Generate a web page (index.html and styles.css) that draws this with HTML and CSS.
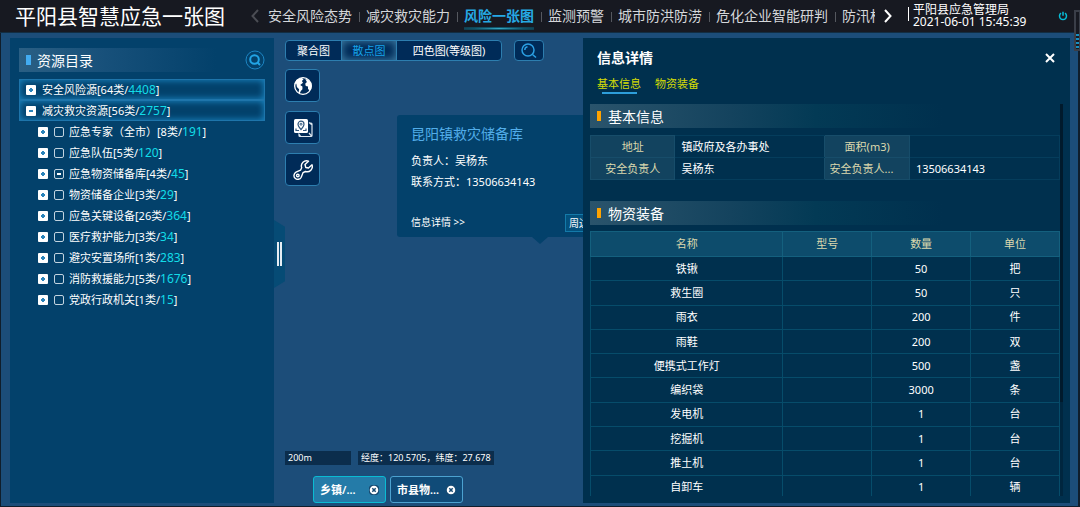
FILE: index.html
```html
<!DOCTYPE html>
<html lang="zh-CN">
<head>
<meta charset="utf-8">
<title>平阳县智慧应急一张图</title>
<link rel="stylesheet" href="styles.css">
</head>
<body>
<header class="top">
  <h1 class="brand">平阳县智慧应急一张图</h1>
  <button class="arrow arrow-prev" aria-label="上一页"><svg viewBox="0 0 8 14"><path d="M7 1 1.500 7 7 13"/></svg></button>
  <nav class="nav">
    <a href="#">安全风险态势</a>
    <a href="#">减灾救灾能力</a>
    <a href="#" class="current">风险一张图</a>
    <a href="#">监测预警</a>
    <a href="#">城市防洪防涝</a>
    <a href="#">危化企业智能研判</a>
    <a href="#">防汛标准</a>
  </nav>
  <button class="arrow arrow-next" aria-label="下一页"><svg viewBox="0 0 8 14"><path d="M1 1 6.500 7 1 13"/></svg></button>
  <div class="org"><span>平阳县应急管理局</span><time>2021-06-01 15:45:39</time></div>
  <button class="power" aria-label="退出"><svg viewBox="0 0 10 10"><path d="M3 2.200a3.500 3.500 0 1 0 4 0M5 .800v4"/></svg></button>
  <div class="edge-meter"><i></i></div>
</header>

<main class="workspace">
  <aside class="catalog">
    <div class="catalog-head">
      <h2>资源目录</h2>
      <button class="round-search" aria-label="搜索"><svg viewBox="0 0 20 20"><circle cx="10" cy="10" r="9"/><circle class="lens" cx="9.500" cy="9.500" r="4.300"/><path class="lens" d="M12.500 12.500l2.500 2.500"/></svg></button>
    </div>
    <ul class="tree">
      <li class="root"><button class="toggle plus" aria-label="展开"></button><span>安全风险源[64类/<b>4408</b>]</span></li>
      <li class="root"><button class="toggle" aria-label="收起"></button><span>减灾救灾资源[56类/<b>2757</b>]</span></li>
      <li><button class="toggle plus" aria-label="展开"></button><label><input type="checkbox"><span>应急专家（全市）[8类/<b>191</b>]</span></label></li>
      <li><button class="toggle plus" aria-label="展开"></button><label><input type="checkbox"><span>应急队伍[5类/<b>120</b>]</span></label></li>
      <li><button class="toggle plus" aria-label="展开"></button><label><input type="checkbox" class="partial"><span>应急物资储备库[4类/<b>45</b>]</span></label></li>
      <li><button class="toggle plus" aria-label="展开"></button><label><input type="checkbox"><span>物资储备企业[3类/<b>29</b>]</span></label></li>
      <li><button class="toggle plus" aria-label="展开"></button><label><input type="checkbox"><span>应急关键设备[26类/<b>364</b>]</span></label></li>
      <li><button class="toggle plus" aria-label="展开"></button><label><input type="checkbox"><span>医疗救护能力[3类/<b>34</b>]</span></label></li>
      <li><button class="toggle plus" aria-label="展开"></button><label><input type="checkbox"><span>避灾安置场所[1类/<b>283</b>]</span></label></li>
      <li><button class="toggle plus" aria-label="展开"></button><label><input type="checkbox"><span>消防救援能力[5类/<b>1676</b>]</span></label></li>
      <li><button class="toggle plus" aria-label="展开"></button><label><input type="checkbox"><span>党政行政机关[1类/<b>15</b>]</span></label></li>
    </ul>
  </aside>

  <section class="map">
    <button class="drawer" aria-label="收起目录"></button>
    <div class="map-top">
      <div class="modes">
        <button>聚合图</button><button class="active">散点图</button><button class="wide">四色图(等级图)</button>
      </div>
      <button class="box-btn find" aria-label="查找"><svg viewBox="0 0 16 16"><circle cx="7" cy="7" r="6"/><path d="M11.500 11.500 15 14.500M3.800 7A3.300 3.300 0 0 1 6.500 3.800"/></svg></button>
    </div>
    <div class="tools">
      <button class="box-btn" aria-label="底图"><svg viewBox="0 0 18 18"><circle cx="9" cy="9" r="7.500" fill="none" stroke="#fff" stroke-width="1.200"/><path fill="#fff" d="M3 3.500 7.500 1.500 9.500 3 8 4.500 9 6 6.500 8 8.500 9.500 8.500 12 7 13.500 6 16 5 15 5.500 12 3.500 10 3 7 1.500 7ZM11 2.500 14 3.500 16.500 7 16.500 11 15 13.500 13.500 11.500 13.500 9.500 11.500 9 11 7 12.500 5.500Z"/></svg></button>
      <button class="box-btn" aria-label="图层"><svg viewBox="0 0 20 20" fill="none"><path stroke="#dce6ee" stroke-width="1.200" d="M16 5h2q1 0 1 1V17.500q0 1-1 1H7q-1 0-1-1V16M16 4.500l2.500 2M5.500 15.500l2 2.500M16 15l2.500 3"/><rect x="1" y="1" width="14" height="14" rx="1.500" fill="#fff"/><path stroke="#31577d" stroke-width="1.200" d="M8 11.500C5.500 8.500 5 7.500 5 6.200a3 3 0 0 1 6 0c0 1.300-.500 2.300-3 5.300ZM3 10.500v2h3M10 12.500h3v-2"/><circle cx="8" cy="6.200" r="1" stroke="#31577d"/></svg></button>
      <button class="box-btn" aria-label="工具"><svg viewBox="0 0 20 20" fill="none" stroke="#fff" stroke-width="1.400" stroke-linejoin="round"><path d="M15.500 1.200A5.200 5.200 0 0 0 8.700 7.800L7.500 10.200 3 12.200A3.800 3.800 0 1 0 8.200 17.200L10 12.700 12.500 11.500A5.200 5.200 0 0 0 19 4.800L15.500 8 12.800 7.500 12 4.500Z"/><circle cx="4.800" cy="15.500" r="1.300"/></svg></button>
    </div>
    <article class="popup">
      <h3>昆阳镇救灾储备库</h3>
      <p>负责人：吴杨东</p>
      <p>联系方式：13506634143</p>
      <div class="popup-foot"><a href="#">信息详情 &gt;&gt;</a><button>周边资源</button></div>
    </article>
    <div class="map-bottom">
      <div class="readouts"><span class="scale">200m</span><span>经度：120.5705，纬度：27.678</span></div>
      <div class="chips">
        <button class="chip on">乡镇/...<svg viewBox="0 0 10 10"><circle cx="5" cy="5" r="5"/><path d="m3.300 3.300 3.400 3.400m0-3.400-3.400 3.400"/></svg></button>
        <button class="chip">市县物...<svg viewBox="0 0 10 10"><circle cx="5" cy="5" r="5"/><path d="m3.300 3.300 3.400 3.400m0-3.400-3.400 3.400"/></svg></button>
      </div>
    </div>
  </section>

  <aside class="detail">
    <div class="detail-head"><h2>信息详情</h2><button class="close" aria-label="关闭"><svg viewBox="0 0 10 10"><path d="m1 1 8 8M9 1 1 9"/></svg></button></div>
    <nav class="tabs"><a href="#basic" class="selected">基本信息</a><a href="#goods">物资装备</a></nav>
    <div class="scroll">
      <div class="scroll-body">
        <h3 class="section" id="basic">基本信息</h3>
        <table class="info">
          <tr><th scope="row">地址</th><td>镇政府及各办事处</td><th scope="row">面积(m3)</th><td></td></tr>
          <tr><th scope="row">安全负责人</th><td>吴杨东</td><th scope="row" class="long">安全负责人...</th><td>13506634143</td></tr>
        </table>
        <h3 class="section" id="goods">物资装备</h3>
        <table class="goods">
          <colgroup><col class="c-name"><col class="c-model"><col class="c-count"><col class="c-unit"></colgroup>
          <thead><tr><th>名称</th><th>型号</th><th>数量</th><th>单位</th></tr></thead>
          <tbody>
            <tr><td>铁锹</td><td></td><td>50</td><td>把</td></tr>
            <tr><td>救生圈</td><td></td><td>50</td><td>只</td></tr>
            <tr><td>雨衣</td><td></td><td>200</td><td>件</td></tr>
            <tr><td>雨鞋</td><td></td><td>200</td><td>双</td></tr>
            <tr><td>便携式工作灯</td><td></td><td>500</td><td>盏</td></tr>
            <tr><td>编织袋</td><td></td><td>3000</td><td>条</td></tr>
            <tr><td>发电机</td><td></td><td>1</td><td>台</td></tr>
            <tr><td>挖掘机</td><td></td><td>1</td><td>台</td></tr>
            <tr><td>推土机</td><td></td><td>1</td><td>台</td></tr>
            <tr><td>自卸车</td><td></td><td>1</td><td>辆</td></tr>
          </tbody>
        </table>
      </div>
      <div class="track"><i></i></div>
    </div>
  </aside>
</main>
</body>
</html>
```

FILE: styles.css
```css
*, *::before, *::after { box-sizing: border-box; }
html, body { height: 100%; }
body {
  margin: 0;
  display: flex;
  flex-direction: column;
  overflow: hidden;
  color: #fff;
  background: #1c4d79;
  font: 11px/21px "Noto Sans", "Noto Sans CJK SC", sans-serif;
}
h1, h2, h3, p, ul { margin: 0; padding: 0; font-weight: 400; }
a { color: inherit; text-decoration: none; }
button { margin: 0; padding: 0; border: 0; background: none; color: inherit; font: inherit; cursor: pointer; }
svg { display: block; }

/* Header */
.top {
  position: relative;
  display: flex;
  align-items: center;
  flex: none;
  height: 33px;
  padding: 0 12px 0 15px;
  background: #171921;
  border-bottom: 1px solid #122d42;
}
.brand { width: 236px; font-size: 21px; line-height: 32px; white-space: nowrap; }
.arrow svg { width: 8px; height: 14px; fill: none; stroke: #fff; stroke-width: 2; }
.arrow-prev { margin-right: 9px; }
.arrow-prev svg { stroke: #4b4d54; }
.nav { display: flex; flex: 1; overflow: hidden; font-size: 14px; line-height: 32px; color: #d5d7da; white-space: nowrap; }
.nav a { position: relative; flex: none; margin-right: 14px; }
.nav a:not(:last-child)::after { content: ""; position: absolute; right: -8px; top: 12px; height: 10px; border-left: 1px solid #55585f; }
.nav .current { color: #26a9e4; font-weight: 700; }
.nav .current::before {
  content: "";
  position: absolute;
  inset: auto 0 2px;
  height: 3px;
  background: radial-gradient(ellipse at center, #35a9c4, #0f5268 50%, #123542);
}
.arrow-next { margin: 0 16px 0 9px; }
.org { position: relative; display: flex; flex-direction: column; width: 150px; padding: 0 0 1px 5px; font-size: 12px; line-height: 12px; white-space: nowrap; }
.org::before { content: ""; position: absolute; left: 0; top: 3px; height: 14px; border-left: 1px solid #fff; }
.power svg { width: 10px; height: 10px; fill: none; stroke: #06bcd6; stroke-width: 1.500; }
.edge-meter { position: absolute; z-index: 2; right: 0; top: 10px; width: 6px; height: 41px; border: 2px solid #3a3e48; border-right-width: 1px; background: #171921; }
.edge-meter i { display: block; height: 14px; margin-top: 22px; background: repeating-linear-gradient(#168fc2 0 2px, #171921 2px 4px); }

/* Work area */
.workspace {
  display: flex;
  flex: 1;
  min-height: 0;
  padding: 5px 8px 3px 9px;
  border: solid #101d2b;
  border-width: 0 2px 1px 1px;
}

/* Resource catalogue */
.catalog { flex: none; width: 264px; padding: 10px 9px; background: #03416b; }
.catalog-head { display: flex; align-items: center; justify-content: space-between; height: 24px; background: linear-gradient(90deg, #2a5f84, #17507a 35%, #03416b 80%); }
.catalog-head h2 { display: flex; align-items: center; gap: 6px; padding-left: 7px; font-size: 14px; }
.catalog-head h2::before { content: ""; width: 5px; height: 10px; background: #42acf2; }
.round-search svg { width: 20px; height: 20px; fill: none; stroke: #1d86c4; stroke-width: 1; }
.round-search .lens { stroke: #22a4e5; stroke-width: 2; }
.tree { margin-top: 7px; list-style: none; white-space: nowrap; }
.tree li { display: flex; align-items: center; gap: 6px; height: 21px; padding-left: 19px; }
.tree .root { padding-left: 6px; border: 1px solid #1e75ab; box-shadow: inset 0 0 7px #1c8bc9; }
.tree b { color: #12dce8; font-size: 12px; font-weight: 400; }
.tree label { display: flex; align-items: center; }
.toggle { flex: none; width: 10px; height: 10px; border-radius: 1px; background: linear-gradient(#2a84bb, #2a84bb) center / 4px 2px no-repeat #fff; }
.toggle.plus { background: linear-gradient(#2a84bb, #2a84bb) center / 4px 2px no-repeat, linear-gradient(#2a84bb, #2a84bb) center / 2px 4px no-repeat #fff; }
.tree input { appearance: none; width: 10px; height: 10px; margin: 0 5px 0 0; border: 1px solid #c2d3df; border-radius: 2px; }
.tree .partial { background: linear-gradient(#fff, #fff) center / 4px 2px no-repeat; }

/* Map */
.map { position: relative; display: flex; flex-direction: column; flex: 1; min-width: 0; overflow: hidden; padding: 2px 0 0 11px; }
.drawer { position: absolute; left: 0; top: 182px; width: 11px; height: 68px; background: #064b75; clip-path: polygon(0 0, 100% 10%, 100% 90%, 0 100%); }
.drawer::before { content: ""; position: absolute; left: 3px; top: 22px; width: 5px; height: 24px; border: solid #e6edf3; border-width: 0 2px; }
.map-top { display: flex; gap: 12px; }
.modes { display: flex; height: 21px; overflow: hidden; border: 1px solid #2d7eaf; border-radius: 4px; background: #002b58; line-height: 19px; white-space: nowrap; }
.modes button { width: 55px; }
.modes .active { width: 56px; border: solid #2d7eaf; border-width: 0 1px; color: #16a2e8; box-shadow: inset 0 0 8px #4384aa; }
.modes .wide { width: 104px; }
.box-btn { display: flex; align-items: center; justify-content: center; width: 35px; height: 33px; border: 1px solid #2d7eaf; border-radius: 4px; background: #002b58; }
.box-btn svg { width: 20px; height: 20px; }
.find { width: 30px; height: 21px; }
.find svg { width: 16px; height: 16px; fill: none; stroke: #2ba0e4; stroke-width: 1.500; }
.tools { display: flex; flex-direction: column; gap: 9px; margin-top: 8px; }
.popup { position: absolute; left: 123px; top: 77px; width: 286px; padding: 8px 14px 4px; border-radius: 3px; background: #03416b; }
.popup::after { content: ""; position: absolute; left: 135px; top: 100%; border: solid transparent; border-width: 7px 8px 0; border-top-color: #03416b; }
.popup h3 { margin-bottom: 6px; color: #52ade9; font-size: 14px; }
.popup p { white-space: nowrap; }
.popup-foot { display: flex; align-items: center; gap: 100px; margin-top: 20px; font-size: 10px; white-space: nowrap; }
.popup-foot button { width: 48px; height: 18px; border: 1px solid #147aa9; background: #03517d; line-height: 16px; }
.map-bottom { display: flex; flex-direction: column; gap: 11px; margin-top: auto; }
.readouts { display: flex; gap: 7px; font-size: 9px; line-height: 14px; white-space: nowrap; }
.readouts span { padding: 0 3px; background: #0b2d4c; }
.readouts .scale { width: 66px; }
.chips { display: flex; gap: 4px; padding-left: 28px; }
.chip { display: flex; align-items: center; justify-content: space-between; width: 73px; height: 27px; padding: 0 6px; border: 1px solid #4ca2d0; border-radius: 3px; background: #104b78; font-weight: 600; white-space: nowrap; }
.chip.on { border-color: #0abbd3; background: #247ba8; }
.chip svg { width: 10px; height: 10px; fill: #fff; stroke: #174b72; stroke-width: 1.500; }

/* Detail panel */
.detail { display: flex; flex-direction: column; flex: none; width: 487px; padding: 9px 7px 7px; background: #00304e; }
.detail-head { display: flex; align-items: center; justify-content: space-between; padding: 0 8px 0 7px; }
.detail-head h2 { font-size: 14px; font-weight: 700; }
.close svg { width: 10px; height: 10px; stroke: #fff; stroke-width: 2; }
.tabs { display: flex; gap: 14px; height: 36px; padding: 5px 7px 0; color: #d5dc05; }
.tabs a { position: relative; height: 21px; }
.tabs .selected::after { content: ""; position: absolute; left: 5px; bottom: 0; width: 35px; height: 2px; background: #2d9edb; }
.scroll { display: flex; flex: 1; min-height: 0; overflow: hidden; }
.scroll-body { flex: 1; min-width: 0; }
.track { flex: none; width: 3px; background: #00263f; }
.track i { display: block; height: 76%; background: #011a2c; }
.section { display: flex; align-items: center; gap: 7px; height: 24px; padding-left: 7px; background: linear-gradient(90deg, #2a546c, #14435e 30%, #033a55 48%, #00304e 75%); font-size: 14px; }
.section::before { content: ""; width: 4px; height: 10px; background: #ffa300; }
table { width: 100%; border-collapse: collapse; table-layout: fixed; line-height: 18px; }
th, td { padding: 0; border: 1px solid #064c6a; }
th { color: #dcd9ae; font-weight: 400; }
.info { height: 45px; margin: 7px 0 21px; }
.info th { width: 18%; border-color: #174d6a; background: #12435f; white-space: nowrap; }
.info .long { padding-left: 4px; text-align: left; }
.info td { width: 32%; padding-left: 6px; border-width: 1px 0; border-color: #053d5c; }
.info td:last-child { border-right-width: 1px; }
.goods { height: 269px; margin-top: 6px; text-align: center; }
.goods th { height: 25px; background: #0d4c6c; border-color: #14607e; }
.c-name { width: 41%; }
.c-model { width: 19%; }
.c-count { width: 21%; }
.c-unit { width: 19%; }
```
